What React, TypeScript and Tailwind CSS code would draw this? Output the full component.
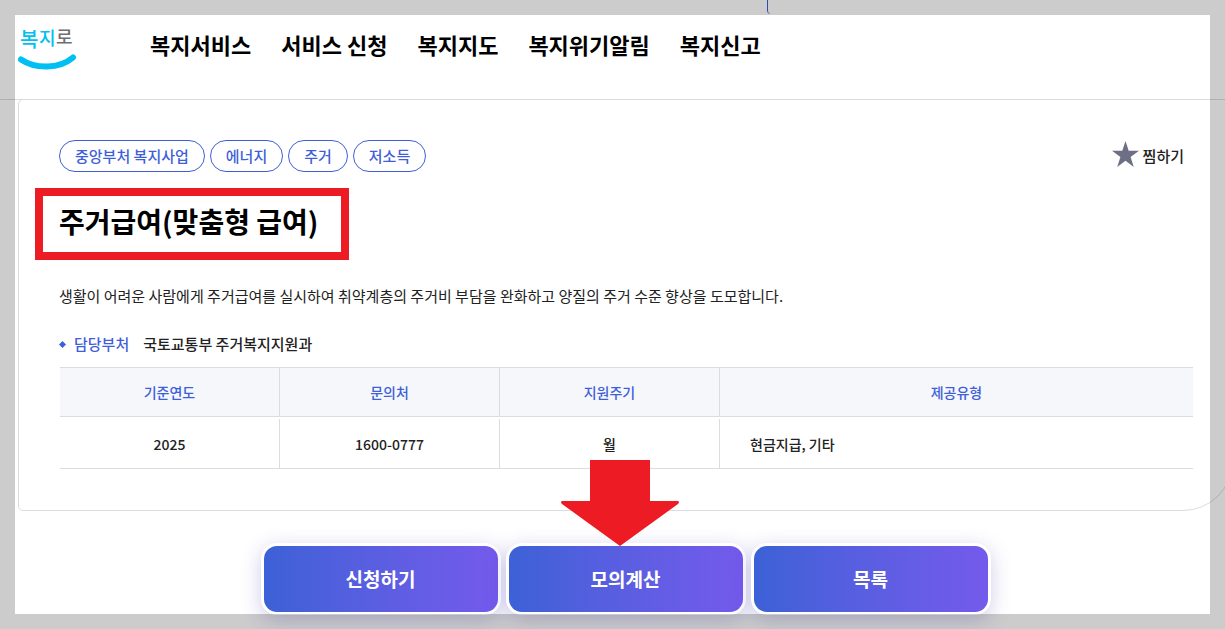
const menus = ['복지서비스', '서비스 신청', '복지지도', '복지위기알림', '복지신고'];
const tags = ['중앙부처 복지사업', '에너지', '주거', '저소득'];
const actions = ['신청하기', '모의계산', '목록'];

const summary = [
  { label: '기준연도', value: '2025' },
  { label: '문의처', value: '1600-0777' },
  { label: '지원주기', value: '월' },
  { label: '제공유형', value: '현금지급, 기타' },
];

function Logo() {
  return (
    <svg className="h-[52px] w-[60px]" viewBox="0 0 60 52" aria-label="복지로">
      <g fontWeight="500" fill="#00bff3">
        <text x="2" y="28" fontSize="20">복</text>
        <text x="21" y="26" fontSize="18">지</text>
        <text x="38" y="25" fontSize="18" fill="#6d6e71">로</text>
      </g>
      <path
        d="M3 40.500C17 50 41 50.500 55 38.500"
        fill="none"
        stroke="#00bff3"
        strokeWidth="6"
        strokeLinecap="round"
      />
    </svg>
  );
}

function Header() {
  return (
    <header className="flex h-[100px] items-center gap-[72px] border-b border-[#dcdcdc] pb-[10px] pl-[18px]">
      <a href="#home">
        <Logo />
      </a>
      <nav className="flex gap-[30px] text-[22px] font-bold text-black">
        {menus.map((menu) => (
          <a key={menu} href="#menu" className="whitespace-nowrap">
            {menu}
          </a>
        ))}
      </nav>
    </header>
  );
}

function SummaryTable() {
  return (
    <table className="w-full table-fixed border-separate border-spacing-x-0 border-spacing-y-[2px] text-sm font-medium">
      <colgroup>
        <col className="w-[220px]" />
        <col className="w-[220px]" />
        <col className="w-[220px]" />
        <col />
      </colgroup>
      <thead>
        <tr>
          {summary.map(({ label }) => (
            <th
              key={label}
              scope="col"
              className="h-[50px] border-y border-r border-[#dcdcdc] bg-[#f5f7fb] p-0 font-medium text-[#3f5fd9] last:border-r-0"
            >
              {label}
            </th>
          ))}
        </tr>
      </thead>
      <tbody>
        <tr>
          {summary.map(({ label, value }) => (
            <td
              key={label}
              className="h-[50px] border-r border-b border-[#dcdcdc] p-0 text-center last:border-r-0 last:pl-[30px] last:text-left"
            >
              {value}
            </td>
          ))}
        </tr>
      </tbody>
    </table>
  );
}

function ServiceCard() {
  return (
    <section className="-mt-px rounded-[5px] rounded-br-[50px] border border-[#dcdcdc] p-10">
      <div className="flex items-center justify-between">
        <ul className="flex gap-[5px]">
          {tags.map((tag) => (
            <li
              key={tag}
              className="flex h-8 items-center rounded-full border border-[#3f5fd9] px-[15px] text-[15px] font-medium text-[#3f5fd9]"
            >
              {tag}
            </li>
          ))}
        </ul>
        <button type="button" className="flex items-center gap-1 pr-2 text-[15px] font-medium">
          <svg className="h-[30px] w-[27px]" viewBox="0 0 27 30" aria-hidden="true">
            <path
              d="M13.500 0L16.700 9.800H27L18.600 15.900L21.800 26L13.500 19.800L5.200 26L8.400 15.900L0 9.800H10.300Z"
              fill="#6d7085"
            />
          </svg>
          찜하기
        </button>
      </div>

      <h1 className="relative mt-7 w-fit text-[28px] leading-[42px] font-bold text-black">
        주거급여(맞춤형 급여)
        <span className="absolute -top-3 -left-6 h-[72px] w-[314px] border-8 border-[#ed1c24]" />
      </h1>
      <p className="mt-[42px] text-[15px] leading-6">
        생활이 어려운 사람에게 주거급여를 실시하여 취약계층의 주거비 부담을 완화하고 양질의 주거 수준 향상을 도모합니다.
      </p>

      <dl className="mt-6 flex items-center text-[15px] leading-6 font-medium">
        <dt className="flex items-center gap-2 text-[#3f5fd9]">
          <svg className="h-[7px] w-[7px]" viewBox="0 0 7 7" aria-hidden="true">
            <path d="M3.500 0L7 3.500L3.500 7L0 3.500Z" fill="#3f5fd9" />
          </svg>
          담당부처
        </dt>
        <dd className="ml-[14px]">국토교통부 주거복지지원과</dd>
      </dl>
      <div className="-mr-px -mb-px pt-[9px] pl-px">
        <SummaryTable />
      </div>
    </section>
  );
}

function ArrowMarker() {
  return (
    <svg
      className="pointer-events-none absolute -top-[83px] left-[54px] h-[87px] w-[120px]"
      viewBox="0 0 120 87"
      aria-hidden="true"
    >
      <path d="M30 0H90V41H118Q120 42 118 44L60 86L2 44Q0 42 2 41H30Z" fill="#ed1c24" />
    </svg>
  );
}

export default function App() {
  return (
    <div
      className="relative min-h-screen overflow-hidden bg-white text-[#222222]"
      style={{ fontFamily: '"Noto Sans CJK KR", sans-serif' }}
    >
      <Header />
      <main className="-mr-2 ml-[18px]">
        <ServiceCard />
        <div className="mt-8 flex justify-center gap-[5px] pb-[14px]">
          {actions.map((action) => (
            <div key={action} className="relative">
              <button
                type="button"
                className="h-[72px] w-[240px] rounded-[16px] bg-white p-[3px] shadow-[0_5px_20px_rgba(60,50,170,0.25)]"
              >
                <span className="flex h-full items-center justify-center rounded-[13px] bg-linear-to-r from-[#3c61d7] to-[#745aec] text-[19px] font-bold text-white">
                  {action}
                </span>
              </button>
              {action === '모의계산' && <ArrowMarker />}
            </div>
          ))}
        </div>
      </main>

      <div className="absolute top-0 left-[767px] h-[14px] w-1 rounded-bl-[4px] border-l border-[#3f5fd9]" />
      <div className="pointer-events-none absolute inset-0 border-[15px] border-black/20" />
    </div>
  );
}
